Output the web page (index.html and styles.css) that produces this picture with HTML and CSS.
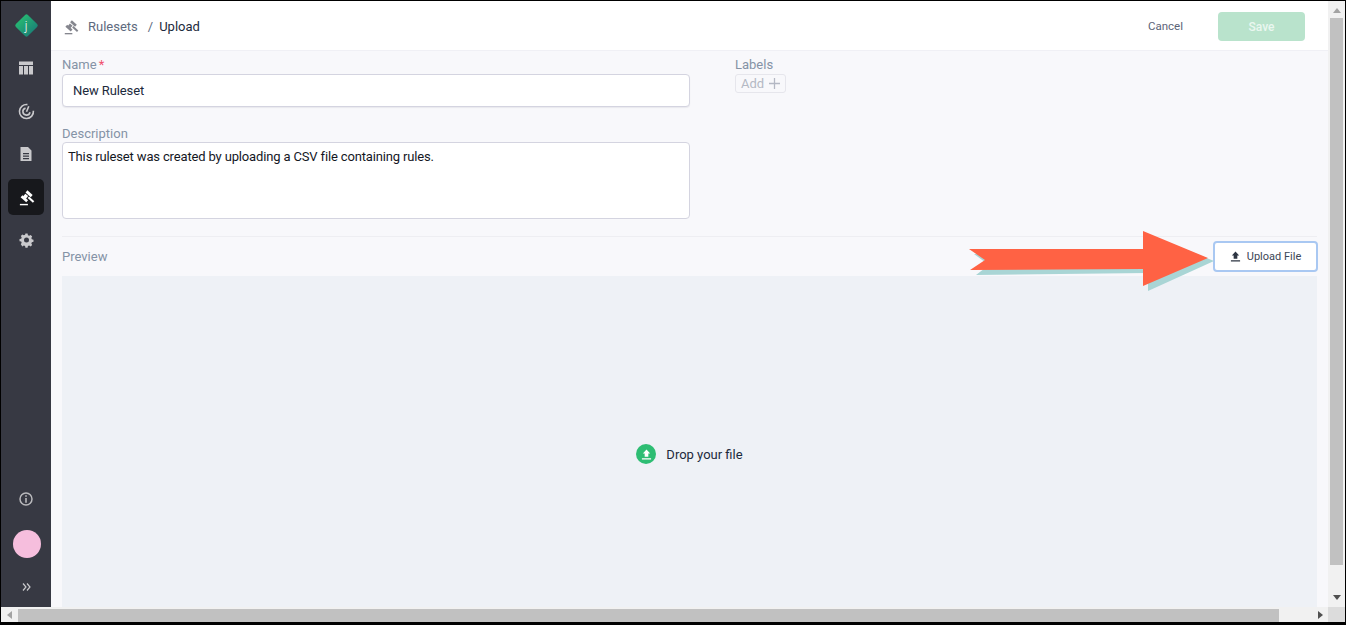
FILE: index.html
```html
<!DOCTYPE html>
<html lang="en">
<head>
<meta charset="utf-8">
<title>Upload Ruleset</title>
<link rel="stylesheet" href="styles.css">
</head>
<body>
<div class="window">
  <div class="viewport">
    <aside class="sidebar">
      <div class="logo"><span class="logo-j">j</span></div>
      <nav class="nav">
        <a class="nav-item"><svg class="ico" viewBox="0 0 16 16"><path d="M1 1.500h14v3.500H1zM1 6h4v8.500H1zM6 6h4v8.500H6zM11 6h4v8.500h-4z"/></svg></a>
        <a class="nav-item"><svg class="ico-line" viewBox="0 0 18 18"><path d="M10 1.700A7.400 7.400 0 1 0 16.300 8.200"/><path d="M8 5.400A3.800 3.800 0 1 0 12.700 9.800"/><path d="M9 9.200l2.400-5.700"/></svg></a>
        <a class="nav-item"><svg class="ico" viewBox="0 0 16 16"><path fill-rule="evenodd" d="M2.500 1H10l3.500 3.500V15h-11zM5 7v1.200h6V7zm0 2.600v1.200h6V9.600zm0 2.500v1.200h6v-1.200z"/></svg></a>
        <a class="nav-item nav-active"><svg class="gavel gavel-white" viewBox="0 0 18 18"><path class="gavel-head" d="M9 2.500l5.500 5"/><path class="gavel-head" d="M3.700 7.700l6 5.300"/><path class="gavel-mid" d="M6.500 6.500l3 2.500"/><path class="gavel-handle" d="M11 8.800l5.500 5"/><path class="gavel-base" d="M2 16.500h8.500"/></svg></a>
        <a class="nav-item"><svg class="ico ico-gear" viewBox="0 0 18 19"><path fill-rule="evenodd" d="M7.700 1.800h2.600l.4 2 1.500.7 1.800-1 1.800 1.900-1 1.700.6 1.500 2 .5v2.600l-2 .4-.6 1.500 1 1.800-1.800 1.800-1.800-1-1.500.6-.4 2H7.700l-.4-2-1.500-.6-1.800 1L2.200 14.700l1-1.800-.6-1.500-2-.4V8.400l2-.5.6-1.500-1-1.700 1.800-1.900 1.800 1 1.500-.7zM9 6.500a3 3 0 1 0 0 6 3 3 0 0 0 0-6z"/></svg></a>
      </nav>
      <div class="side-bottom">
        <svg class="info" viewBox="0 0 14 14"><circle class="info-ring" cx="7" cy="7" r="6"/><path class="info-mark" d="M6.200 3.200h1.600v1.600H6.200zM6.200 6h1.600v4.800H6.200z"/></svg>
        <div class="avatar"></div>
        <svg class="expand" viewBox="0 0 9 8"><path d="M1 .5L4 4 1 7.500M5 .5L8 4 5 7.500"/></svg>
      </div>
    </aside>
    <div class="content">
      <header class="topbar">
        <div class="crumbs">
          <svg class="gavel gavel-gray" viewBox="0 0 18 18"><path class="gavel-head" d="M9 2.500l5.500 5"/><path class="gavel-head" d="M3.700 7.700l6 5.300"/><path class="gavel-mid" d="M6.500 6.500l3 2.500"/><path class="gavel-handle" d="M11 8.800l5.500 5"/><path class="gavel-base" d="M2 16.500h8.500"/></svg>
          <span class="crumb-link">Rulesets</span>
          <span class="crumb-sep">/</span>
          <span class="crumb-current">Upload</span>
        </div>
        <div class="actions">
          <button class="btn-cancel">Cancel</button>
          <button class="btn-save">Save</button>
        </div>
      </header>
      <main class="main">
        <section class="form">
          <div class="col-left">
            <label class="label label-name">Name<span class="req">*</span></label>
            <div class="input">New Ruleset</div>
            <label class="label label-desc">Description</label>
            <div class="textarea">This ruleset was created by uploading a CSV file containing rules.</div>
          </div>
          <div class="col-right">
            <label class="label label-name">Labels</label>
            <span class="add-tag">Add<svg class="plus" viewBox="0 0 12 12"><path d="M5.300 0h1.400v5.300H12v1.400H6.700V12H5.300V6.700H0V5.300h5.300z"/></svg></span>
          </div>
        </section>
        <section class="preview-bar">
          <span class="label">Preview</span>
          <button class="btn-upload"><svg class="up-ico" viewBox="0 0 12 12"><path d="M6 .5l4 4.500H8v3.500H4V5H2zM1 10h10v1.500H1z"/></svg>Upload File</button>
        </section>
        <section class="drop">
          <div class="drop-msg">
            <span class="drop-ico"><svg viewBox="0 0 12 12"><path d="M6 .5l4 4.500H8v3.500H4V5H2zM1 10h10v1.500H1z"/></svg></span>
            Drop your file
          </div>
        </section>
      </main>
    </div>
    <svg class="arrow" viewBox="0 0 250 64">
      <path fill="#a9d5d5" d="M6 25L21 36 8 46l172-2v18l66-30-66-27v19z"/>
      <path fill="#ff6244" d="M1 20L17 31 2 41l173-1v17l65-28-65-27v18z"/>
    </svg>
  </div>
  <div class="vscroll">
    <span class="arr arr-up"></span>
    <span class="vthumb"></span>
    <span class="arr arr-down"></span>
  </div>
  <div class="hscroll">
    <span class="arr arr-left"></span>
    <span class="hthumb"></span>
    <span class="arr arr-right"></span>
  </div>
  <div class="corner"></div>
</div>
</body>
</html>
```
FILE: styles.css
```css
* { box-sizing: border-box; }
html, body { margin: 0; height: 100%; overflow: hidden; background: #000; }
body { font-family: "Roboto", "Liberation Sans", sans-serif; font-size: 14px; color: #1c2230; }

.window {
  width: 1344px;
  height: 621px;
  margin: 1px 1px 3px 1px;
  display: grid;
  grid-template-columns: 1fr 17px;
  grid-template-rows: 1fr 15px;
  background: #f8f8fb;
}
.viewport { position: relative; display: flex; overflow: hidden; min-width: 0; min-height: 0; }

.sidebar { width: 50px; flex: none; background: #373943; display: flex; flex-direction: column; align-items: center; }
.logo {
  width: 17px; height: 17px; margin: 16px 0 16px;
  transform: rotate(45deg);
  border-radius: 2px;
  background: linear-gradient(90deg, #25b573, #1c8576);
  display: flex; align-items: center; justify-content: center;
}
.logo-j { transform: rotate(-45deg); color: #fff; font-size: 12px; font-weight: 300; line-height: 1; }
.nav { display: flex; flex-direction: column; gap: 7px; }
.nav-item { width: 36px; height: 36px; border-radius: 5px; display: flex; align-items: center; justify-content: center; }
.nav-active { background: #17181c; }
.ico { width: 16px; height: 16px; fill: #c9c9cc; }
.ico-line { width: 17px; height: 17px; fill: none; stroke: #c9c9cc; stroke-width: 1.7; }
.ico-gear { width: 15px; height: 16px; }

.gavel { width: 17px; height: 17px; fill: none; }
.gavel-white { stroke: #fff; }
.gavel-gray { stroke: #85868e; width: 16px; height: 16px; margin-right: 9px; }
.gavel-head { stroke-width: 3; }
.gavel-mid { stroke-width: 4; }
.gavel-handle { stroke-width: 2.2; }
.gavel-base { stroke-width: 1.5; }

.side-bottom { margin-top: auto; display: flex; flex-direction: column; align-items: center; }
.info { width: 14px; height: 14px; margin-bottom: 24px; }
.info-ring { fill: none; stroke: #b9b9bc; stroke-width: 1.5; }
.info-mark { fill: #b9b9bc; }
.avatar { width: 28px; height: 28px; border-radius: 50%; background: #f6bedd; margin-bottom: 25px; margin-left: 1px; }
.expand { width: 9px; height: 8px; fill: none; stroke: #c9c9cc; stroke-width: 1.2; margin-bottom: 16px; }

.content { flex: 1; min-width: 0; display: flex; flex-direction: column; }
.topbar {
  height: 50px; flex: none;
  background: #fff;
  border-bottom: 1px solid #f0f0f5;
  display: flex; align-items: center; justify-content: space-between;
  padding: 2px 23px 0 12px;
}
.crumbs { display: flex; align-items: center; font-size: 13px; }
.crumb-link { color: #5e6a7e; }
.crumb-sep { color: #5e6a7e; margin: 0 6px 0 10px; }
.crumb-current { color: #1c2a3c; }
.actions { display: flex; align-items: center; gap: 35px; }
.btn-cancel { border: 0; background: none; padding: 0; margin-bottom: 2px; font: inherit; font-size: 11.500px; color: #5c6478; }
.btn-save {
  width: 87px; height: 29px; border: 0; border-radius: 4px;
  background: #b9e3cc; color: #eaf7f0; font: inherit; font-size: 12px; font-weight: 500;
}

.main { flex: 1; padding: 0 11px; display: flex; flex-direction: column; min-height: 0; overflow: hidden; }
.form { display: flex; gap: 45px; border-bottom: 1px solid #eeeef2; height: 186px; flex: none; }
.col-left { width: 628px; flex: none; }
.col-right { flex: 1; }
.label { display: block; color: #8593a6; font-size: 13px; line-height: 16px; }
.label-name { margin-top: 6px; margin-bottom: 1px; }
.label-desc { margin-top: 19px; margin-bottom: 0; }
.req { color: #f0506e; margin-left: 2px; }
.input {
  height: 33px; background: #fff;
  border: 1px solid #d4d4e0; border-radius: 4px;
  padding: 0 10px;
  line-height: 31px; font-size: 13px; letter-spacing: -0.1px; color: #1c2a3c;
  box-shadow: 0 1px 1px rgba(60, 60, 90, .08);
}
.textarea {
  height: 77px; background: #fff;
  border: 1px solid #d4d4e0; border-radius: 4px;
  padding: 5px;
  font-size: 13px; letter-spacing: -0.15px; line-height: 17px; color: #14171f;
}
.add-tag {
  display: inline-flex; align-items: center; gap: 5px;
  height: 19px; padding: 0 5px;
  border: 1px solid #e6e6ec; border-radius: 3px;
  color: #b4b8c4; font-size: 13px;
}
.plus { width: 11px; height: 11px; fill: #b4b8c4; }

.preview-bar { height: 39px; flex: none; display: flex; align-items: center; justify-content: space-between; }
.btn-upload {
  width: 105px; height: 31px; margin-right: -1px;
  display: flex; align-items: center; justify-content: center; gap: 6px;
  background: #fff; border: 2px solid #a9c8f2; border-radius: 4px;
  font: inherit; font-size: 11px; color: #3c4656;
  padding: 0;
}
.up-ico { width: 11px; height: 11px; fill: #2c3442; }

.drop { height: 356px; flex: none; background: #eef1f6; display: flex; align-items: center; justify-content: center; }
.drop-msg { display: flex; align-items: center; gap: 10px; font-size: 13px; color: #1c2a3c; }
.drop-ico { width: 20px; height: 20px; border-radius: 50%; background: #2dbd73; display: flex; align-items: center; justify-content: center; }
.drop-ico svg { width: 11px; height: 11px; fill: #fff; }

.arrow { position: absolute; left: 967px; top: 228px; width: 250px; height: 64px; }

.vscroll { background: #f1f1f1; display: flex; flex-direction: column; align-items: center; }
.vthumb { width: 13px; height: 547px; background: #c1c1c1; }
.hscroll { background: #f1f1f1; display: flex; align-items: center; }
.hthumb { width: 1261px; height: 13px; background: #c1c1c1; align-self: flex-end; }
.corner { background: #dcdcdc; }
.arr { width: 0; height: 0; flex: none; border-style: solid; border-color: transparent; }
.arr-up { margin-top: 7px; margin-bottom: 5px; border-width: 0 4px 5px; border-bottom-color: #a3a3a3; }
.arr-down { margin-top: 30px; border-width: 5px 4px 0; border-top-color: #505050; }
.arr-left { margin-left: 6px; margin-right: 6px; border-width: 4px 5px 4px 0; border-right-color: #a3a3a3; }
.arr-right { margin-left: 39px; border-width: 4px 0 4px 5px; border-left-color: #505050; }
```
